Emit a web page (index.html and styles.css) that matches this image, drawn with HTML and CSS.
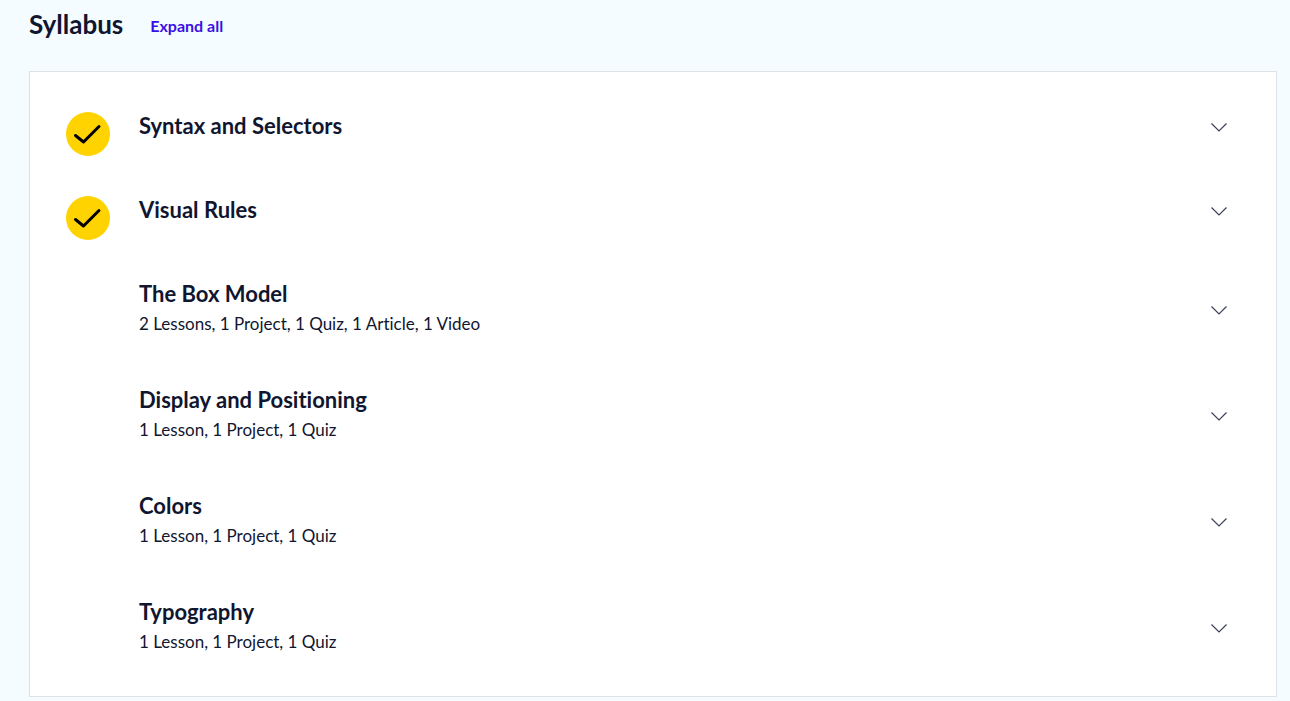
FILE: index.html
```html
<!DOCTYPE html>
<html lang="en">
<head>
<meta charset="utf-8">
<meta name="viewport" content="width=device-width, initial-scale=1">
<title>Syllabus</title>
<link rel="stylesheet" href="styles.css">
</head>
<body>
<svg class="sprite" aria-hidden="true">
  <symbol id="check" viewBox="0 0 44 44"><path d="M9.500 23.500 17.500 30 33 14.500" fill="none" stroke="#000" stroke-width="3" stroke-linecap="round" stroke-linejoin="round"/></symbol>
  <symbol id="chevron" viewBox="0 0 16 11"><path d="M.5 2.500 8 10 15.500 2.500" fill="none" stroke="currentColor" stroke-width="1.200"/></symbol>
</svg>
<main class="syllabus">
  <header class="syllabus-header">
    <h1 class="heading">Syllabus</h1>
    <button class="expand-all" type="button">Expand all</button>
  </header>
  <ul class="modules">
    <li class="module">
      <svg class="badge" role="img" aria-label="Completed"><use href="#check"/></svg>
      <button class="toggle" type="button" aria-expanded="false">
        <span class="text"><span class="title">Syntax and Selectors</span></span>
        <svg class="chevron" aria-hidden="true"><use href="#chevron"/></svg>
      </button>
    </li>
    <li class="module">
      <svg class="badge" role="img" aria-label="Completed"><use href="#check"/></svg>
      <button class="toggle" type="button" aria-expanded="false">
        <span class="text"><span class="title">Visual Rules</span></span>
        <svg class="chevron" aria-hidden="true"><use href="#chevron"/></svg>
      </button>
    </li>
    <li class="module">
      <button class="toggle" type="button" aria-expanded="false">
        <span class="text"><span class="title">The Box Model</span><span class="summary">2 Lessons, 1 Project, 1 Quiz, 1 Article, 1 Video</span></span>
        <svg class="chevron" aria-hidden="true"><use href="#chevron"/></svg>
      </button>
    </li>
    <li class="module">
      <button class="toggle" type="button" aria-expanded="false">
        <span class="text"><span class="title">Display and Positioning</span><span class="summary">1 Lesson, 1 Project, 1 Quiz</span></span>
        <svg class="chevron" aria-hidden="true"><use href="#chevron"/></svg>
      </button>
    </li>
    <li class="module">
      <button class="toggle" type="button" aria-expanded="false">
        <span class="text"><span class="title">Colors</span><span class="summary">1 Lesson, 1 Project, 1 Quiz</span></span>
        <svg class="chevron" aria-hidden="true"><use href="#chevron"/></svg>
      </button>
    </li>
    <li class="module">
      <button class="toggle" type="button" aria-expanded="false">
        <span class="text"><span class="title">Typography</span><span class="summary">1 Lesson, 1 Project, 1 Quiz</span></span>
        <svg class="chevron" aria-hidden="true"><use href="#chevron"/></svg>
      </button>
    </li>
  </ul>
</main>
</body>
</html>
```
FILE: styles.css
```css
* {
  box-sizing: border-box;
}

body {
  margin: 0;
  background: #f5fcff;
  color: #10162f;
  font-family: Lato, "Liberation Sans", sans-serif;
  font-variant-ligatures: none;
}

button {
  padding: 0;
  border: 0;
  background: none;
  color: inherit;
  font: inherit;
  font-variant-ligatures: none;
  text-align: left;
  cursor: pointer;
}

.sprite {
  display: none;
}

.syllabus {
  padding: 8px 13px 4px 29px;
}

.syllabus-header {
  display: flex;
  align-items: center;
  gap: 27px;
  margin-bottom: 31px;
}

.heading {
  margin: 0;
  font-size: 26px;
  line-height: 32px;
  font-weight: 700;
}

.expand-all {
  padding-top: 4px;
  color: #3a10e5;
  font-size: 16px;
  line-height: 24px;
  font-weight: 700;
}

.modules {
  margin: 0;
  padding: 16px 36px;
  border: 1px solid #dee1e6;
  background: #fff;
  list-style: none;
}

.module {
  display: grid;
  grid-template-columns: 44px 1fr;
  column-gap: 29px;
  align-items: start;
}

.badge {
  width: 44px;
  height: 44px;
  margin: 24px 0 16px;
  border-radius: 50%;
  background: #ffd300;
}

.toggle {
  grid-column: 2;
  display: flex;
  align-items: center;
  justify-content: space-between;
  padding: 23px 13px 23px 0;
}

.text {
  display: flex;
  flex-direction: column;
}

.title {
  font-size: 22px;
  line-height: 30px;
  font-weight: 700;
}

.summary {
  font-size: 17px;
  line-height: 30px;
}

.chevron {
  width: 16px;
  height: 11px;
  color: #3c415a;
}
```
